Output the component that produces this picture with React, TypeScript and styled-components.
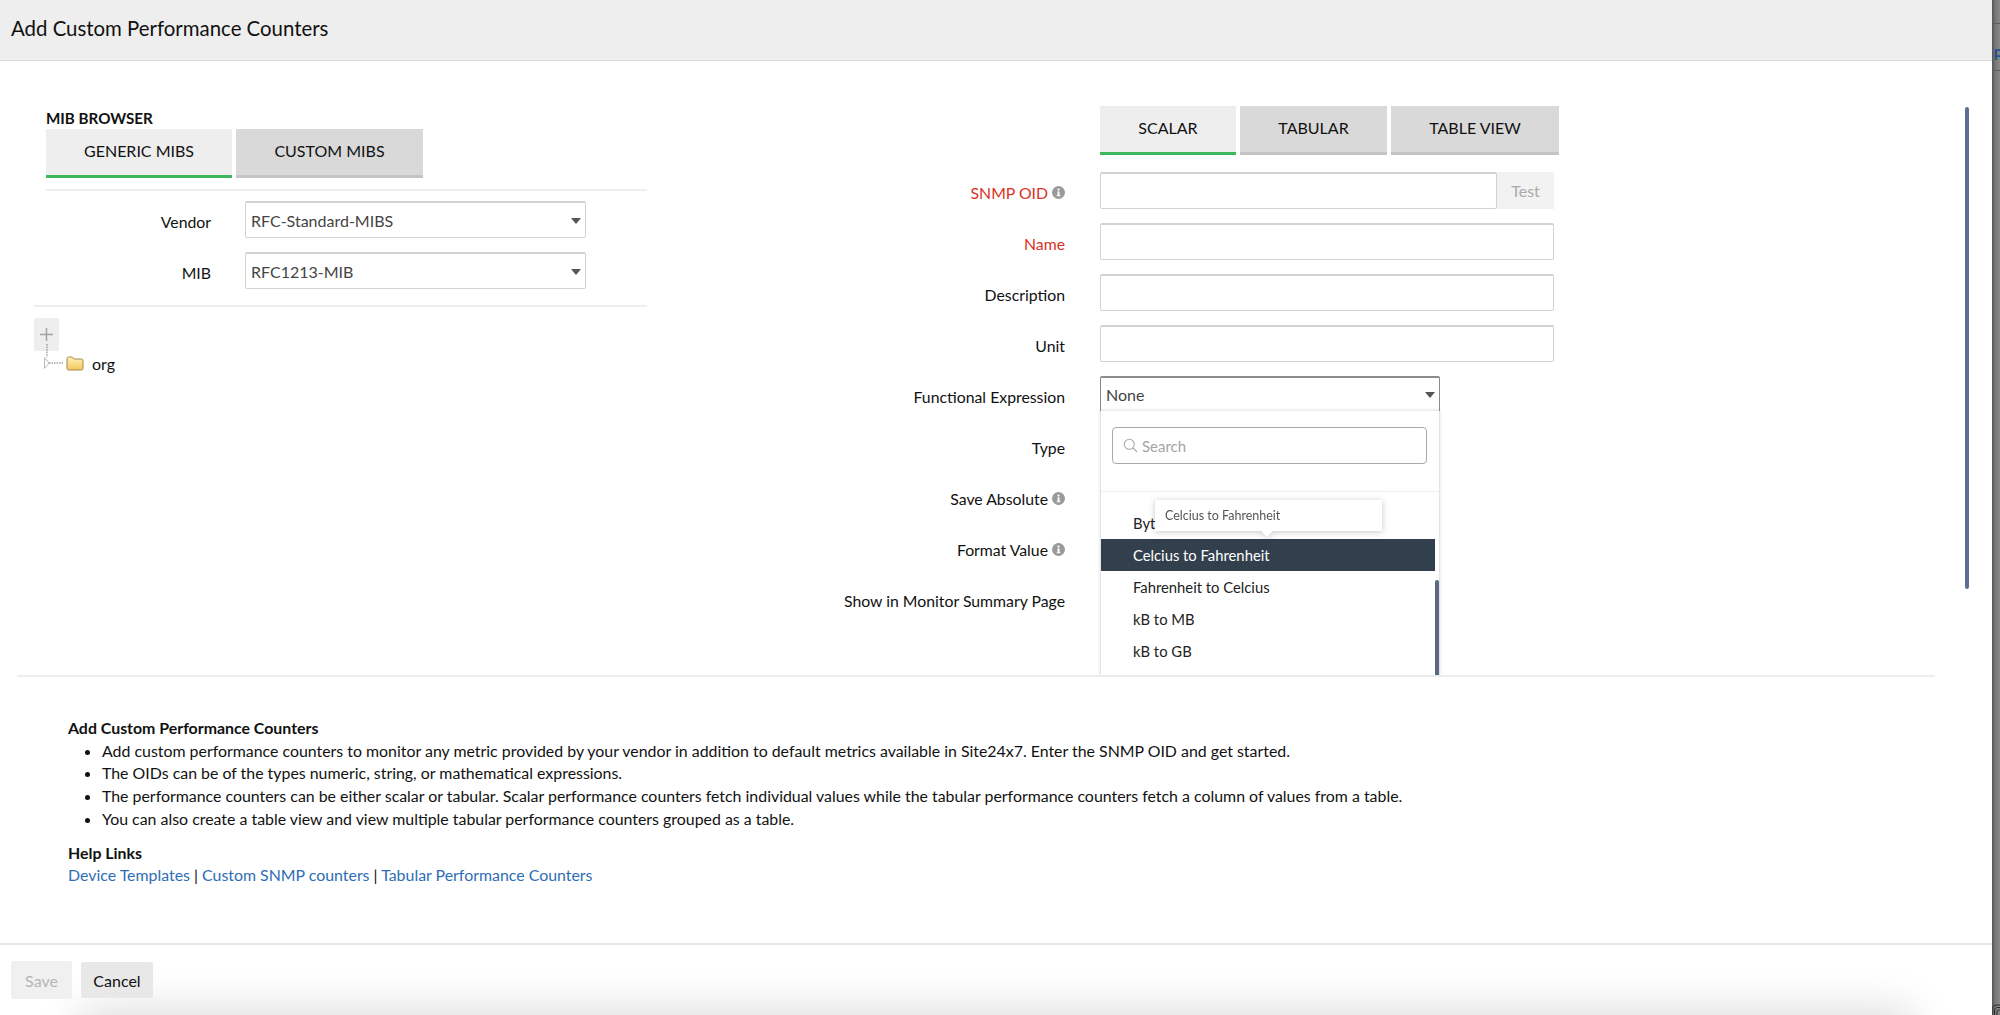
import React from 'react';
import styled, { createGlobalStyle } from 'styled-components';

const GlobalStyle = createGlobalStyle`
  html, body {
    margin: 0;
    padding: 0;
    height: 100%;
    background: #fff;
    font-family: Lato, "Open Sans", sans-serif;
    color: #111;
  }
  * {
    box-sizing: border-box;
  }
`;

const Page = styled.div`
  display: flex;
  width: 2000px;
  height: 1015px;
  overflow: hidden;
`;

const Main = styled.div`
  position: relative;
  display: flex;
  flex-direction: column;
  width: 1992px;
  height: 100%;
`;

const SideStrip = styled.div`
  position: relative;
  width: 8px;
  height: 100%;
  overflow: hidden;
  padding: 43px 0 0 2px;
  font-size: 15px;
  font-weight: 700;
  line-height: 16px;
  color: #1d4f91;
  background: linear-gradient(to right, #555 0, #777 40%, #8a8a8a 100%);

  &::before,
  &::after {
    content: '';
    position: absolute;
    left: 0;
    right: 0;
    height: 1px;
    background: #5c5c5c;
  }
  &::before {
    top: 23px;
  }
  &::after {
    top: 70px;
  }
`;

const StripGlyph = styled.svg`
  position: absolute;
  left: 0;
  bottom: 0;
`;

const Header = styled.div`
  flex: none;
  height: 61px;
  padding: 0 0 4px 11px;
  display: flex;
  align-items: center;
  font-size: 20.4px;
  background: #eee;
  border-bottom: 1px solid #ddd;
`;

const Body = styled.div`
  flex: none;
  height: 616px;
  margin: 0 57px 0 17px;
  display: flex;
  border-bottom: 2px solid #eee;
`;

const LeftColumn = styled.div`
  flex: none;
  width: 630px;
  padding: 46px 0 0 17px;
`;

const SectionTitle = styled.div`
  height: 22px;
  margin-left: 12px;
  font-size: 15.2px;
  font-weight: 700;
  line-height: 22px;
`;

const TabRow = styled.div<{ $gap: number }>`
  display: flex;
  gap: ${(p) => p.$gap}px;
`;

const Tab = styled.div<{ $active?: boolean; $width: number }>`
  flex: none;
  width: ${(p) => p.$width}px;
  height: 49px;
  padding-bottom: 3px;
  display: flex;
  align-items: center;
  justify-content: center;
  font-size: 16px;
  color: #111;
  background: ${(p) => (p.$active ? '#eee' : '#d9d9d9')};
  border-bottom: 3px solid ${(p) => (p.$active ? '#3cb95c' : '#c4c4c4')};
`;

const MibTabs = styled.div`
  margin-left: 12px;
  padding-bottom: 11px;
  border-bottom: 2px solid #eee;
`;

const VendorFields = styled.div`
  margin-left: 12px;
  padding: 10px 0 16px;
  display: flex;
  flex-direction: column;
  gap: 14px;
`;

const VendorRow = styled.div`
  display: flex;
  align-items: center;
  gap: 34px;
`;

const VendorLabel = styled.div`
  width: 165px;
  padding-top: 4px;
  text-align: right;
  font-size: 15.8px;
`;

const SelectBox = styled.div<{ $width: number; $open?: boolean }>`
  position: relative;
  width: ${(p) => p.$width}px;
  height: ${(p) => (p.$open ? 35 : 37)}px;
  padding: 0 5px;
  display: flex;
  align-items: center;
  font-size: 16px;
  color: #444;
  background: #fff;
  border: 1px solid ${(p) => (p.$open ? '#8c8c8c' : '#d2d2d2')};
  border-top-width: 2px;
  border-radius: 2px;
  ${(p) => p.$open && 'border-bottom: none; border-radius: 2px 2px 0 0;'}
`;

const Caret = styled.span<{ $top: number }>`
  position: absolute;
  right: 4px;
  top: ${(p) => p.$top}px;
  width: 0;
  height: 0;
  border-left: 5.5px solid transparent;
  border-right: 5.5px solid transparent;
  border-top: 6px solid #555;
`;

const TreeArea = styled.div`
  border-top: 2px solid #eee;
  padding-top: 11px;
`;

const PlusButton = styled.div`
  width: 25px;
  height: 33px;
  display: flex;
  align-items: center;
  justify-content: center;
  background: #eee;
  border-radius: 2px;
`;

const TreeRow = styled.div`
  display: flex;
  align-items: center;
  height: 24px;
  margin-left: 9px;
  font-size: 16px;
`;

const TreeBranch = styled.svg`
  flex: none;
  margin-top: -12px;
`;

const FolderIcon = styled.svg`
  flex: none;
  margin: 0 8px 0 1px;
`;

const RightColumn = styled.div`
  flex: 1;
  padding: 45px 0 0 453px;
`;

const FormFields = styled.div`
  margin-top: 17px;
  margin-left: -453px;
`;

const FieldRow = styled.div`
  display: flex;
  align-items: flex-start;
  gap: 35px;
  height: 51px;
`;

const FieldLabel = styled.div<{ $required?: boolean }>`
  flex: none;
  width: 418px;
  height: 37px;
  padding-top: 4px;
  display: flex;
  align-items: center;
  justify-content: flex-end;
  gap: 4px;
  font-size: 15.8px;
  color: ${(p) => (p.$required ? '#d9321f' : '#111')};
`;

const TextInput = styled.div<{ $width: number }>`
  flex: none;
  width: ${(p) => p.$width}px;
  height: 37px;
  background: #fff;
  border: 1px solid #d2d2d2;
  border-top-width: 2px;
  border-radius: 2px;
`;

const InputGroup = styled.div`
  display: flex;
`;

const TestButton = styled.div`
  flex: none;
  width: 57px;
  height: 37px;
  display: flex;
  align-items: center;
  justify-content: center;
  font-size: 16px;
  color: #aaa;
  background: #f2f2f2;
`;

const Dropdown = styled.div`
  position: absolute;
  z-index: 2;
  top: 33px;
  left: -1px;
  width: 340px;
  height: 264px;
  overflow: hidden;
  background: #fff;
  border-left: 1px solid #e4e4e4;
  border-right: 1px solid #e4e4e4;
  box-shadow: 0 -1px 3px rgba(0, 0, 0, 0.12);
`;

const SearchSection = styled.div`
  height: 81px;
  padding: 16px 11px 0;
  border-bottom: 1px solid #eee;
`;

const SearchBox = styled.div`
  height: 37px;
  width: 315px;
  padding-left: 10px;
  display: flex;
  align-items: center;
  gap: 4px;
  font-size: 15px;
  color: #a5a5a5;
  border: 1px solid #a9a9a9;
  border-radius: 4px;
`;

const OptionList = styled.div`
  padding-top: 15px;
`;

const Option = styled.div<{ $selected?: boolean }>`
  width: 334px;
  height: 32px;
  padding-left: 32px;
  display: flex;
  align-items: center;
  font-size: 14.8px;
  color: ${(p) => (p.$selected ? '#fff' : '#222')};
  background: ${(p) => (p.$selected ? '#323f4d' : 'transparent')};
`;

const ListScrollbar = styled.div`
  position: absolute;
  right: 0;
  top: 169px;
  bottom: 0;
  width: 4px;
  background: #5a6787;
  border-radius: 2px 2px 0 0;
`;

const Tooltip = styled.div`
  position: absolute;
  z-index: 3;
  top: 89px;
  left: 54px;
  width: 227px;
  height: 31px;
  padding-left: 10px;
  display: flex;
  align-items: center;
  font-size: 12.5px;
  color: #555;
  background: #fff;
  filter: drop-shadow(0 1px 3px rgba(0, 0, 0, 0.22));

  &::after {
    content: '';
    position: absolute;
    left: 105px;
    bottom: -6px;
    width: 0;
    height: 0;
    border-left: 7px solid transparent;
    border-right: 7px solid transparent;
    border-top: 7px solid #fff;
  }
`;

const PageScrollbar = styled.div`
  position: absolute;
  top: 107px;
  left: 1965px;
  width: 4px;
  height: 482px;
  background: #5f6d91;
  border-radius: 2px;
`;

const Info = styled.div`
  flex: 1;
  padding: 40px 0 0 68px;
  font-size: 15.9px;
  line-height: 22.7px;
`;

const InfoTitle = styled.div`
  font-weight: 700;
`;

const BulletList = styled.ul`
  margin: 0;
  padding: 0 0 0 34px;
`;

const HelpTitle = styled.div`
  margin-top: 11px;
  font-weight: 700;
`;

const HelpLink = styled.a`
  color: #2e6db4;
  text-decoration: none;
`;

const Footer = styled.div`
  position: relative;
  flex: none;
  height: 72px;
  padding: 16px 0 0 11px;
  display: flex;
  align-items: flex-start;
  gap: 9px;
  overflow: hidden;
  border-top: 2px solid #e6e6e6;

  &::after {
    content: '';
    position: absolute;
    left: 90px;
    right: 90px;
    top: 76px;
    height: 30px;
    box-shadow: 0 0 44px 10px rgba(0, 0, 0, 0.15);
  }
`;

const FooterButton = styled.div<{ $disabled?: boolean }>`
  position: relative;
  z-index: 1;
  width: ${(p) => (p.$disabled ? 61 : 72)}px;
  height: ${(p) => (p.$disabled ? 38 : 36)}px;
  margin-top: ${(p) => (p.$disabled ? 0 : 1)}px;
  display: flex;
  align-items: center;
  justify-content: center;
  font-size: 16px;
  color: ${(p) => (p.$disabled ? '#b5b5b5' : '#111')};
  background: ${(p) => (p.$disabled ? '#f0f0f0' : '#e8e8e8')};
  border-radius: 2px;
`;

const InfoIcon = () => (
  <svg width="13" height="13" viewBox="0 0 13 13">
    <circle cx="6.5" cy="6.5" r="6.5" fill="#9a9a9a" />
    <rect x="5.6" y="5.4" width="1.9" height="4.6" fill="#fff" />
    <rect x="4.7" y="9.2" width="3.7" height="1" fill="#fff" />
    <circle cx="6.5" cy="3.6" r="1.1" fill="#fff" />
  </svg>
);

const fieldRows = ['Description', 'Unit'];
const options = ['Fahrenheit to Celcius', 'kB to MB', 'kB to GB'];
const bullets = [
  'Add custom performance counters to monitor any metric provided by your vendor in addition to default metrics available in Site24x7. Enter the SNMP OID and get started.',
  'The OIDs can be of the types numeric, string, or mathematical expressions.',
  'The performance counters can be either scalar or tabular. Scalar performance counters fetch individual values while the tabular performance counters fetch a column of values from a table.',
  'You can also create a table view and view multiple tabular performance counters grouped as a table.',
];

const App: React.FC = () => {
  return (
    <Page>
      <GlobalStyle />
      <Main>
        <Header>Add Custom Performance Counters</Header>
        <Body>
          <LeftColumn>
            <SectionTitle>MIB BROWSER</SectionTitle>
            <MibTabs>
              <TabRow $gap={4}>
                <Tab $active $width={186}>GENERIC MIBS</Tab>
                <Tab $width={187}>CUSTOM MIBS</Tab>
              </TabRow>
            </MibTabs>
            <VendorFields>
              <VendorRow>
                <VendorLabel>Vendor</VendorLabel>
                <SelectBox $width={341}>
                  RFC-Standard-MIBS
                  <Caret $top={15} />
                </SelectBox>
              </VendorRow>
              <VendorRow>
                <VendorLabel>MIB</VendorLabel>
                <SelectBox $width={341}>
                  RFC1213-MIB
                  <Caret $top={15} />
                </SelectBox>
              </VendorRow>
            </VendorFields>
            <TreeArea>
              <PlusButton>
                <svg width="15" height="15" viewBox="0 0 15 15">
                  <path d="M7.5 1v13M1 7.5h13" stroke="#a3a3a3" strokeWidth="1.5" />
                </svg>
              </PlusButton>
              <TreeRow>
                <TreeBranch width="22" height="26" viewBox="0 0 22 26">
                  <path d="M4 0v13" stroke="#777" strokeWidth="1" strokeDasharray="1.5 1" fill="none" />
                  <path d="M6 19h15" stroke="#777" strokeWidth="1" strokeDasharray="1.5 1" fill="none" />
                  <path d="M1.5 13.5l4.5 5.5-4.5 5.5z" stroke="#bbb" strokeWidth="1" fill="#fff" />
                </TreeBranch>
                <FolderIcon width="18" height="16" viewBox="0 0 18 16">
                  <defs>
                    <linearGradient id="folderFill" x1="0" y1="0" x2="0" y2="1">
                      <stop offset="0" stopColor="#fff2b8" />
                      <stop offset="1" stopColor="#f2c75c" />
                    </linearGradient>
                  </defs>
                  <path
                    d="M1 3.5C1 2.6 1.6 2 2.500 2h3.800l1.700 2h7.500c.9 0 1.500.6 1.500 1.500v8c0 .9-.6 1.500-1.500 1.500h-13C1.600 15 1 14.400 1 13.500z"
                    fill="url(#folderFill)"
                    stroke="#a8894a"
                    strokeWidth="1"
                  />
                </FolderIcon>
                org
              </TreeRow>
            </TreeArea>
          </LeftColumn>
          <RightColumn>
            <TabRow $gap={4}>
              <Tab $active $width={136}>SCALAR</Tab>
              <Tab $width={147}>TABULAR</Tab>
              <Tab $width={168}>TABLE VIEW</Tab>
            </TabRow>
            <FormFields>
              <FieldRow>
                <FieldLabel $required>
                  SNMP OID <InfoIcon />
                </FieldLabel>
                <InputGroup>
                  <TextInput $width={397} />
                  <TestButton>Test</TestButton>
                </InputGroup>
              </FieldRow>
              <FieldRow>
                <FieldLabel $required>Name</FieldLabel>
                <TextInput $width={454} />
              </FieldRow>
              {fieldRows.map((label) => (
                <FieldRow key={label}>
                  <FieldLabel>{label}</FieldLabel>
                  <TextInput $width={454} />
                </FieldRow>
              ))}
              <FieldRow>
                <FieldLabel>Functional Expression</FieldLabel>
                <SelectBox $width={340} $open>
                  None
                  <Caret $top={14} />
                  <Dropdown>
                    <SearchSection>
                      <SearchBox>
                        <svg width="15" height="15" viewBox="0 0 15 15" fill="none">
                          <circle cx="6.300" cy="6.300" r="5" stroke="#aaa" strokeWidth="1.100" />
                          <path d="M10 10l4 4" stroke="#aaa" strokeWidth="1.100" />
                        </svg>
                        Search
                      </SearchBox>
                    </SearchSection>
                    <OptionList>
                      <Option>Byt</Option>
                      <Option $selected>Celcius to Fahrenheit</Option>
                      {options.map((option) => (
                        <Option key={option}>{option}</Option>
                      ))}
                    </OptionList>
                    <Tooltip>Celcius to Fahrenheit</Tooltip>
                    <ListScrollbar />
                  </Dropdown>
                </SelectBox>
              </FieldRow>
              <FieldRow>
                <FieldLabel>Type</FieldLabel>
              </FieldRow>
              <FieldRow>
                <FieldLabel>
                  Save Absolute <InfoIcon />
                </FieldLabel>
              </FieldRow>
              <FieldRow>
                <FieldLabel>
                  Format Value <InfoIcon />
                </FieldLabel>
              </FieldRow>
              <FieldRow>
                <FieldLabel>Show in Monitor Summary Page</FieldLabel>
              </FieldRow>
            </FormFields>
          </RightColumn>
        </Body>
        <Info>
          <InfoTitle>Add Custom Performance Counters</InfoTitle>
          <BulletList>
            {bullets.map((bullet) => (
              <li key={bullet}>{bullet}</li>
            ))}
          </BulletList>
          <HelpTitle>Help Links</HelpTitle>
          <div>
            <HelpLink href="#">Device Templates</HelpLink> | <HelpLink href="#">Custom SNMP counters</HelpLink> |{' '}
            <HelpLink href="#">Tabular Performance Counters</HelpLink>
          </div>
        </Info>
        <Footer>
          <FooterButton $disabled>Save</FooterButton>
          <FooterButton>Cancel</FooterButton>
        </Footer>
        <PageScrollbar />
      </Main>
      <SideStrip>
        p
        <StripGlyph width="8" height="11" viewBox="0 0 8 11" fill="none">
          <path d="M0 10.500V5c0-2 2-4 5-4h3M2.500 11V6c0-1.500 1.500-2.500 3-2.500H8M5 11V7.500C5 6.500 6 6 8 6" stroke="#2b2b2b" strokeWidth="1" />
        </StripGlyph>
      </SideStrip>
    </Page>
  );
};

export default App;
